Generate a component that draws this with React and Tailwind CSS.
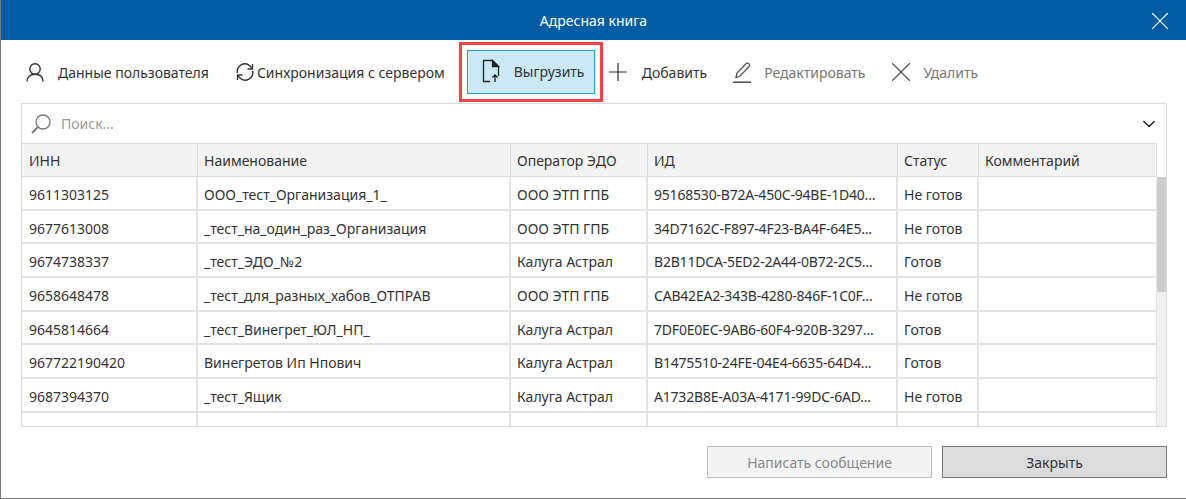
import React from "react";
import { ChevronDown, Plus, X } from "lucide-react";

const rows = [
  ["9611303125", "ООО_тест_Организация_1_", "ООО ЭТП ГПБ", "95168530-B72A-450C-94BE-1D40...", "Не готов"],
  ["9677613008", "_тест_на_один_раз_Организация", "ООО ЭТП ГПБ", "34D7162C-F897-4F23-BA4F-64E5...", "Не готов"],
  ["9674738337", "_тест_ЭДО_№2", "Калуга Астрал", "B2B11DCA-5ED2-2A44-0B72-2C5...", "Готов"],
  ["9658648478", "_тест_для_разных_хабов_ОТПРАВ", "ООО ЭТП ГПБ", "CAB42EA2-343B-4280-846F-1C0F...", "Не готов"],
  ["9645814664", "_тест_Винегрет_ЮЛ_НП_", "Калуга Астрал", "7DF0E0EC-9AB6-60F4-920B-3297...", "Готов"],
  ["967722190420", "Винегретов Ип Нпович", "Калуга Астрал", "B1475510-24FE-04E4-6635-64D4...", "Готов"],
  ["9687394370", "_тест_Ящик", "Калуга Астрал", "A1732B8E-A03A-4171-99DC-6AD...", "Не готов"],
  ["9682907307", "_тест_Организация", "Калуга Астрал", "CB491C0B-5FBB-2659-0BDB-360...", "Не готов"],
];

const headers = ["ИНН", "Наименование", "Оператор ЭДО", "ИД", "Статус", "Комментарий"];

const gridCols = "grid grid-cols-[176px_313px_137px_250px_81px_177px]";

const ToolButton = ({ icon, label, disabled, className }) => (
  <div className={`mt-[16px] flex h-[32px] items-center ${disabled ? "text-[#777]" : "text-[#333]"} ${className}`}>
    {icon}
    <span>{label}</span>
  </div>
);

export default function App() {
  return (
    <div className="h-[499px] w-[1186px] overflow-hidden border-b border-l border-[#7a7a7a] bg-white font-['Noto_Sans',sans-serif] text-[14px] text-[#333]">
      <div className="relative flex h-10 items-center justify-center bg-[#005da3] text-white">
        Адресная книга
        <X className="absolute right-[18px] top-[13px] h-[16px] w-[16px]" viewBox="6 6 12 12" strokeWidth={0.9} />
      </div>

      <div className="flex h-[63px] items-start pl-[25px]">
        <ToolButton
          className=""
          icon={
            <svg className="mr-[14px] h-[19px] w-[18px]" viewBox="0 0 18 19" fill="none" stroke="#333" strokeWidth="1.4">
              <circle cx="9" cy="6" r="5.2" />
              <path d="M1 18.5c0-4.5 3-7.3 8-7.3s8 2.800 8 7.300" />
            </svg>
          }
          label="Данные пользователя"
        />
        <ToolButton
          className="ml-[27px]"
          icon={
            <svg className="mr-[3px] h-[18px] w-[18px]" viewBox="0 0 18 18" fill="none" stroke="#333" strokeWidth="1.5">
              <path d="M1.500 10a7.500 7.500 0 0 1 12.500-7l2 2" />
              <path d="M16.500 1v5h-5" strokeWidth="1.3" />
              <path d="M16.500 8a7.500 7.500 0 0 1-12.500 7l-2-2" />
              <path d="M1.500 17v-5h5" strokeWidth="1.3" />
            </svg>
          }
          label="Синхронизация с сервером"
        />
        <div className="ml-[14px] mt-[2px] border-[3px] border-[#f74346] p-[5px]">
          <div className="flex h-[44px] w-[128px] items-center border border-[#26a0da] bg-[#cbe8f6] pb-[2px] pl-[14px]">
            <svg className="mr-[14px] h-[24px] w-[18px]" viewBox="0 0 18 24" fill="none" stroke="#222" strokeWidth="1.3">
              <path d="M8 22.500H1.500V1.500h9l6 6V17" />
              <path d="M10.500 1.500v6h6z" fill="#222" />
              <path d="M13 23v-7M10.500 18.500L13 16l2.500 2.500" />
            </svg>
            <span>Выгрузить</span>
          </div>
        </div>
        <ToolButton
          className="ml-[6px]"
          icon={<Plus className="mr-[15px] h-[18px] w-[18px]" viewBox="5 5 14 14" strokeWidth={0.95} />}
          label="Добавить"
        />
        <ToolButton
          disabled
          className="ml-[26px]"
          icon={
            <svg className="mr-[12px] h-[21px] w-[19px]" viewBox="0 0 19 21" fill="none" stroke="#555" strokeWidth="1.3">
              <path d="M3 15.500l1-4.500L13 1.800c1-1 2.200-1 3 0s.8 2 0 3L7 14z" />
              <path d="M0 20.200h18" strokeWidth="1.6" />
            </svg>
          }
          label="Редактировать"
        />
        <ToolButton
          disabled
          className="ml-[27px]"
          icon={<X className="mr-[13px] h-[18px] w-[18px] text-[#555]" viewBox="6 6 12 12" strokeWidth={0.85} />}
          label="Удалить"
        />
      </div>

      <div className="ml-[20px] w-[1146px]">
        <div className="h-[324px] overflow-hidden border border-[#dcdcdc]">
          <div className="flex h-[39px] items-center pl-[9px] pr-[11px]">
            <svg className="mr-[10px] h-[20px] w-[20px]" viewBox="0 0 20 20" fill="none" stroke="#777" strokeWidth="1.3">
              <circle cx="12" cy="8" r="7" />
              <path d="M7 13L1 19" strokeWidth="1.8" />
            </svg>
            <span className="flex-1 text-[#999]">Поиск...</span>
            <ChevronDown className="h-[12px] w-[12px] text-[#222]" viewBox="5 5 14 14" strokeWidth={1.7} />
          </div>

          <div className="flex">
            <div className="w-[1134px] shrink-0">
              <div className={`${gridCols} h-[34px] border-y border-[#dcdcdc] bg-[#f3f3f3]`}>
                {headers.map((h) => (
                  <div key={h} className="flex items-center border-r border-[#dcdcdc] px-[6px] first:pl-[7px] last:border-r-0">
                    {h}
                  </div>
                ))}
              </div>
              {rows.map((row) => (
                <div key={row[0]} className={`${gridCols} h-[33.67px] border-b-2 border-[#e3e3e3]`}>
                  {[...row, ""].map((cell, i) => (
                    <div
                      key={i}
                      className={`overflow-hidden whitespace-nowrap border-r-2 border-[#e3e3e3] px-[6px] pt-[8px] leading-[20px] first:pl-[7px] last:border-r-0 ${i === 3 ? "tracking-[-0.2px]" : ""}`}
                    >
                      {cell}
                    </div>
                  ))}
                </div>
              ))}
            </div>
            <div className="w-[11px] flex-1 border-l border-[#e3e3e3]">
              <div className="h-[34px] bg-white" />
              <div className="h-[115px] bg-[#cdcdcd]" />
              <div className="h-[200px] bg-[#f0f0f0]" />
            </div>
          </div>
        </div>

        <div className="mt-[19px] flex justify-end gap-[10px]">
          <div className="flex h-[32px] w-[225px] items-center justify-center border border-[#bfbfbf] bg-[#f3f3f3] text-[#8a8a8a]">
            Написать сообщение
          </div>
          <div className="flex h-[32px] w-[225px] items-center justify-center border border-[#7a7a7a] bg-[#dcdcdc]">
            Закрыть
          </div>
        </div>
      </div>
    </div>
  );
}
